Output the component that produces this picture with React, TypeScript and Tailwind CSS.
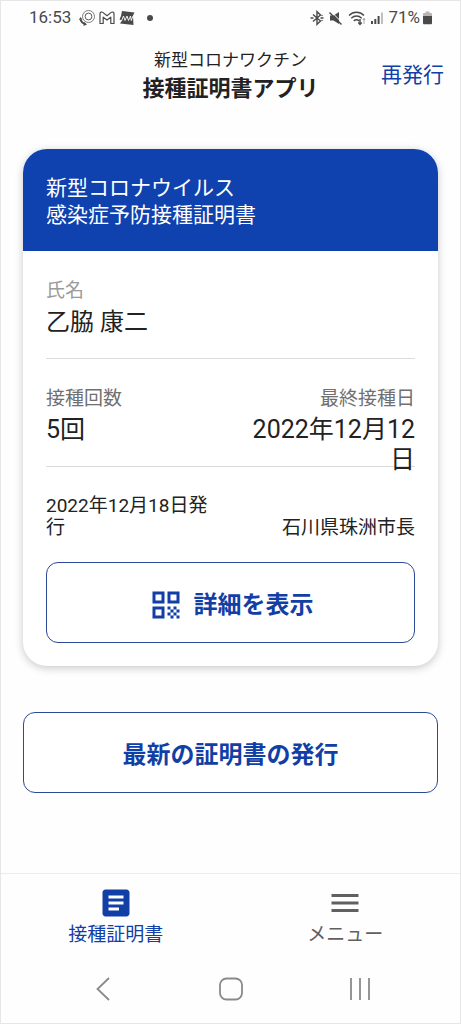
import type { ReactNode } from 'react'
import { MdArticle, MdMenu, MdQrCode } from 'react-icons/md'

function StatusBar() {
  return (
    <div className="flex items-center justify-between h-[34px] px-7 text-[17px] text-[#4a4a4a]">
      <div className="flex items-center gap-1">
        <span className="mr-1">16:53</span>
        <svg className="w-4 h-4" viewBox="0 0 16 16" fill="none" stroke="currentColor">
          <circle cx="9.500" cy="6.500" r="6" strokeWidth="0.7" />
          <circle cx="9.500" cy="6.500" r="3.400" strokeWidth="0.9" />
          <path d="M1.500 9.500c.8 2.500 2.300 4 5 4.700" strokeWidth="1.800" />
          <path d="M0 10 1.300 7 3.500 9.500M5 12l3 2.500L4.500 16" fill="currentColor" stroke="none" />
        </svg>
        <svg className="w-4 h-4" viewBox="0 0 16 16" fill="none" stroke="currentColor" strokeWidth="1.2" strokeLinejoin="round">
          <path d="M1 13.500V3.700C1 2 2.800 1.600 3.800 2.400L8 5.700l4.200-3.300c1-.8 2.800-.4 2.800 1.300v9.800h-3.200V7.200L8 10.100 4.200 7.200v6.300z" />
        </svg>
        <svg className="w-4 h-4" viewBox="0 0 16 16">
          <path d="M3 1l12.500 1.500-1.500 3 .5 9.500L1 13.500l2-3-2.500-1L2 6z" fill="currentColor" />
          <path d="M2.500 11 4.500 6l1.500 4.500L8 6l1.500 4.500L11.500 6l.8 4.500L14 6" fill="none" stroke="#fff" strokeWidth="0.9" />
        </svg>
        <span className="w-[6px] h-[6px] ml-2 rounded-full bg-[#4a4a4a]" />
      </div>
      <div className="flex items-center gap-[5px]">
        <svg className="w-[14px] h-4" viewBox="0 0 14 16" fill="none" stroke="currentColor" strokeWidth="1.400">
          <path d="M3 4.500 10.500 11 7 14.300V1.700L10.500 5 3 11.500" />
          <path d="M1 8h2M11 8h2M12 5.500v.01M12 10.500v.01" strokeLinecap="round" />
        </svg>
        <svg className="w-[14px] h-4" viewBox="0 0 14 16" fill="currentColor">
          <path d="M1 5.500h3.500L10 2v12L4.500 10.500H1z" />
          <path d="M1.500 1 14 13.500" stroke="#fff" strokeWidth="1" />
          <path d="M.5 2.500 12.500 14.500" stroke="currentColor" strokeWidth="1.500" />
        </svg>
        <svg className="w-[18px] h-4" viewBox="0 0 18 16" fill="none" stroke="currentColor" strokeWidth="1.400">
          <path d="M1 5.500c4.200-4.300 10.800-4.300 15 0M3.300 8.300c3-3 7.400-3 10.400 0M5.800 11c1.600-1.600 3.800-1.600 5.400 0" />
          <path d="M12 9v5M10.300 12.500 12 14.500l1.700-2" />
          <path d="M16 14V8.500M14.800 10 16 8.500 17.200 10" strokeWidth="0.800" opacity=".6" />
        </svg>
        <svg className="w-3 h-4" viewBox="0 0 12 16" fill="currentColor">
          <path d="M0 11h2v3H0zM3.300 9h2v5h-2zM6.600 6h2v8h-2z" />
          <path d="M10 2.500h2V14h-2z" opacity=".35" />
        </svg>
        <span className="flex items-center gap-[3px]">
          71%
          <svg className="w-[9px] h-4" viewBox="0 0 9 16" fill="currentColor">
            <path d="M2.500 1.500h4V3h1.300C8.500 3 9 3.500 9 4.200V6H0V4.200C0 3.500.5 3 1.200 3h1.300z" opacity=".4" />
            <path d="M0 6h9v7c0 .8-.5 1.300-1.200 1.300H1.200C.5 14.300 0 13.800 0 13z" />
          </svg>
        </span>
      </div>
    </div>
  )
}

function OutlineButton({ children }: { children: ReactNode }) {
  return (
    <button
      type="button"
      className="flex items-center justify-center gap-[10px] w-full h-[81px] pt-1 rounded-xl border border-[#2a4a94] bg-white text-2xl font-bold text-[#123fa6]"
    >
      {children}
    </button>
  )
}

function Certificate() {
  return (
    <section className="rounded-3xl bg-white overflow-hidden shadow-[0_2px_8px_rgba(0,0,0,0.22)]">
      <h2 className="px-[23px] pt-[26px] pb-[22px] bg-[#0f41af] text-[21px] leading-[27px] text-white">
        新型コロナウイルス
        <br />
        感染症予防接種証明書
      </h2>

      <div className="px-[23px] pb-[23px]">
        <div className="h-27 pt-[26px] border-b border-[#dcdcdc]">
          <p className="text-[19px] leading-7 text-[#9a9a9a]">氏名</p>
          <p className="mt-[2px] text-2xl leading-[30px]">乙脇 康二</p>
        </div>

        {/* The last dose date may run onto the rule below */}
        <div className="flex justify-between h-27 pt-[26px] border-b border-[#dcdcdc]">
          <div>
            <p className="text-[19px] leading-7 text-[#707070]">接種回数</p>
            <p className="mt-[2px] text-[25px] leading-[30px]">5回</p>
          </div>
          <div className="w-1/2 text-right">
            <p className="text-[19px] leading-7 text-[#707070]">最終接種日</p>
            <p className="mt-[2px] text-[25px] leading-[30px]">2022年12月12日</p>
          </div>
        </div>

        <div className="flex items-end justify-between pt-[28px] pb-[23px] text-[19px] leading-[22px]">
          <p className="w-[46%]">2022年12月18日発行</p>
          <p>石川県珠洲市長</p>
        </div>

        <OutlineButton>
          <MdQrCode className="w-9 h-9" />
          詳細を表示
        </OutlineButton>
      </div>
    </section>
  )
}

function TabBar() {
  return (
    <nav className="grid grid-cols-2 pt-[11px] border-t border-[#ececec] text-[19px] leading-7">
      <button type="button" className="flex flex-col items-center text-[#123fa6]">
        <MdArticle className="w-9 h-9" />
        接種証明書
      </button>
      <button type="button" className="flex flex-col items-center text-[#606060]">
        <MdMenu className="w-9 h-9" />
        メニュー
      </button>
    </nav>
  )
}

function SystemNav() {
  return (
    <div className="grid grid-cols-3 justify-items-center pl-[38px] pr-9 pt-7 pb-[22px] text-[#8a8a8a]">
      <button type="button" aria-label="戻る">
        <svg className="w-6 h-6" viewBox="0 0 24 24" fill="none" stroke="currentColor" strokeWidth="1.800">
          <path d="M18 1 6.500 12 18 23" />
        </svg>
      </button>
      <button type="button" aria-label="ホーム">
        <svg className="w-6 h-6" viewBox="0 0 24 24" fill="none" stroke="currentColor" strokeWidth="1.800">
          <rect x="1" y="1.500" width="22" height="21" rx="6.500" />
        </svg>
      </button>
      <button type="button" aria-label="履歴">
        <svg className="w-6 h-6" viewBox="0 0 24 24" fill="none" stroke="currentColor" strokeWidth="1.800">
          <path d="M3 1v22M12 1v22M21 1v22" />
        </svg>
      </button>
    </div>
  )
}

export default function App() {
  return (
    <div className="flex flex-col min-h-screen border border-[#e6e6e6] bg-[#fefefe] font-['Roboto','Noto_Sans_CJK_JP',sans-serif] text-[#222222]" lang="ja">
      <StatusBar />

      <header className="grid grid-cols-[1fr_auto_1fr] items-center px-4 pt-[11px]">
        <h1 className="col-start-2 text-center">
          <span className="block text-[17px] leading-7">新型コロナワクチン</span>
          <span className="block text-[22px] leading-[30px] font-bold">接種証明書アプリ</span>
        </h1>
        <a href="#reissue" className="justify-self-end text-[21px] leading-7 text-[#123fa6]">
          再発行
        </a>
      </header>

      <main className="flex-1 flex flex-col gap-[46px] px-[22px] pt-[45px] pb-12">
        <Certificate />
        <OutlineButton>最新の証明書の発行</OutlineButton>
      </main>

      <TabBar />
      <SystemNav />
    </div>
  )
}
